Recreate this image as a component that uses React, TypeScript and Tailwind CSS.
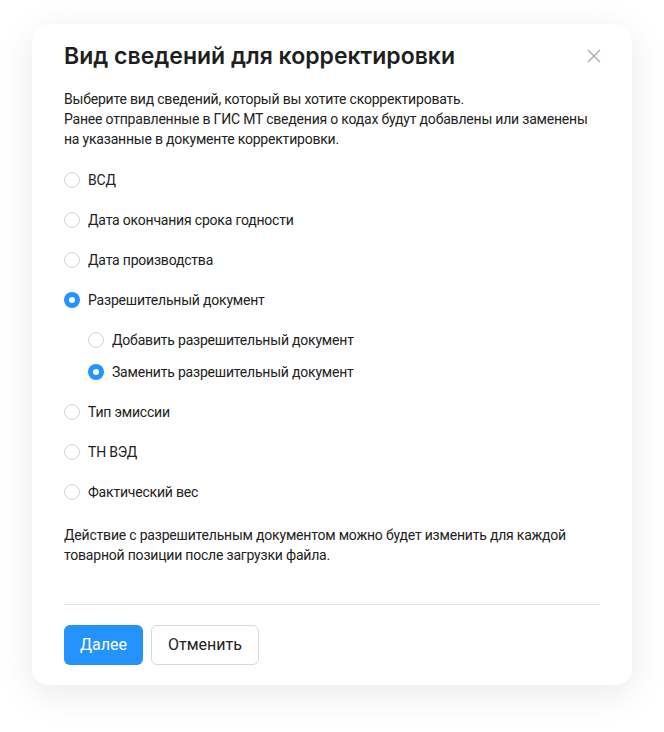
import { useState } from 'react';

function Radio({ checked, label, onClick }: { checked: boolean; label: string; onClick: () => void }) {
  return (
    <button type="button" onClick={onClick} className="flex items-center gap-2 text-left">
      {checked ? (
        <span className="w-4 h-4 rounded-full bg-[#2593fc] flex items-center justify-center">
          <span className="w-1.5 h-1.5 rounded-full bg-white" />
        </span>
      ) : (
        <span className="w-4 h-4 rounded-full border border-[#d6d6d6] bg-white" />
      )}
      <span className="text-sm text-[#222] tracking-[-0.2px]">{label}</span>
    </button>
  );
}

export default function App() {
  const options = ['ВСД', 'Дата окончания срока годности', 'Дата производства', 'Разрешительный документ', 'Тип эмиссии', 'ТН ВЭД', 'Фактический вес'];
  const [selected, setSelected] = useState('Разрешительный документ');
  const [action, setAction] = useState('replace');

  return (
    <div className="min-h-screen bg-white pt-6 px-8" style={{ fontFamily: 'Roboto, "Noto Sans", sans-serif' }}>
      <div className="w-[600px] bg-white rounded-2xl shadow-[0_8px_36px_rgba(0,0,0,0.09)] px-8 pt-4 pb-5">
        <div className="flex items-center justify-between h-8">
          <h2 className="text-[23px] font-semibold text-[#1f1f1f]" style={{ fontFamily: 'Inter, Roboto, sans-serif' }}>
            Вид сведений для корректировки
          </h2>
          <button type="button" className="text-[#a8a8a8] -mr-px">
            <svg width="14" height="14" viewBox="0 0 14 14" fill="none" stroke="currentColor" strokeWidth="1.2">
              <path d="M1 1l12 12M13 1L1 13" />
            </svg>
          </button>
        </div>

        <p className="mt-[17px] text-sm leading-5 text-[#222] tracking-[-0.2px]">
          Выберите вид сведений, который вы хотите скорректировать.
          <br />
          Ранее отправленные в ГИС МТ сведения о кодах будут добавлены или заменены на указанные в документе корректировки.
        </p>

        <div className="mt-[11px] flex flex-col">
          {options.map((opt) => (
            <div key={opt}>
              <div className="h-10 flex items-center">
                <Radio checked={selected === opt} label={opt} onClick={() => setSelected(opt)} />
              </div>
              {opt === 'Разрешительный документ' && (
                <div className="pl-6 py-1 flex flex-col">
                  <div className="h-8 flex items-center">
                    <Radio checked={action === 'add'} label="Добавить разрешительный документ" onClick={() => setAction('add')} />
                  </div>
                  <div className="h-8 flex items-center">
                    <Radio checked={action === 'replace'} label="Заменить разрешительный документ" onClick={() => setAction('replace')} />
                  </div>
                </div>
              )}
            </div>
          ))}
        </div>

        <p className="mt-[13px] text-sm leading-5 text-[#222] tracking-[-0.2px]">
          Действие с разрешительным документом можно будет изменить для каждой товарной позиции после загрузки файла.
        </p>

        <div className="mt-[39px] border-t border-[#e4e4e4]" />

        <div className="mt-5 flex gap-2">
          <button type="button" className="h-10 px-4 rounded-md bg-[#2593fc] text-white text-base">
            Далее
          </button>
          <button type="button" className="h-10 px-4 rounded-md border border-[#d9d9d9] bg-white text-[#222] text-base">
            Отменить
          </button>
        </div>
      </div>
    </div>
  );
}
